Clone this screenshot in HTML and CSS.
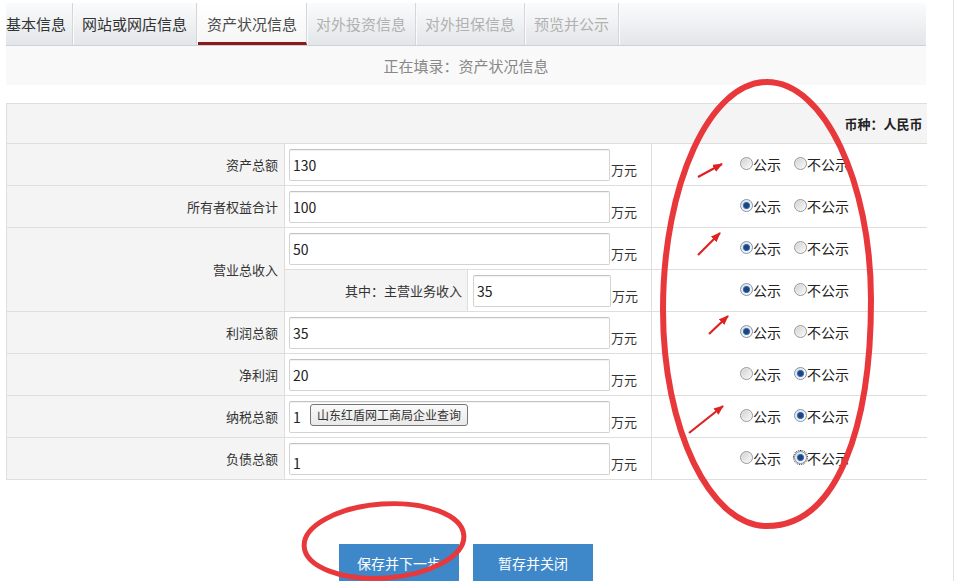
FILE: index.html
```html
<!DOCTYPE html>
<html lang="zh-CN">
<head>
<meta charset="utf-8">
<title>资产状况信息</title>
<link rel="stylesheet" href="styles.css">
</head>
<body>
<div class="frame">
  <div class="page">
    <nav class="tabs">
      <a class="tab tab-first">基本信息</a>
      <a class="tab">网站或网店信息</a>
      <a class="tab active">资产状况信息</a>
      <a class="tab disabled">对外投资信息</a>
      <a class="tab disabled">对外担保信息</a>
      <a class="tab disabled">预览并公示</a>
    </nav>
    <div class="notice">正在填录：资产状况信息</div>

    <table class="form">
      <colgroup><col class="c-label"><col class="c-input"><col class="c-radio"></colgroup>
      <tr class="head"><th colspan="3">币种：人民币</th></tr>
      <tr class="row">
        <td class="label">资产总额</td>
        <td class="field"><div class="fi"><input class="num" value="130"><span class="unit">万元</span></div></td>
        <td class="pub"><label class="opt"><input type="radio" name="r1">公示</label><label class="opt"><input type="radio" name="r1">不公示</label></td>
      </tr>
      <tr class="row">
        <td class="label">所有者权益合计</td>
        <td class="field"><div class="fi"><input class="num" value="100"><span class="unit">万元</span></div></td>
        <td class="pub"><label class="opt"><input type="radio" name="r2" checked>公示</label><label class="opt"><input type="radio" name="r2">不公示</label></td>
      </tr>
      <tr class="row">
        <td class="label" rowspan="2">营业总收入</td>
        <td class="field"><div class="fi"><input class="num" value="50"><span class="unit">万元</span></div></td>
        <td class="pub"><label class="opt"><input type="radio" name="r3" checked>公示</label><label class="opt"><input type="radio" name="r3">不公示</label></td>
      </tr>
      <tr class="row">
        <td class="field split">
          <div class="sub">
            <div class="sub-label">其中：主营业务收入</div>
            <div class="fi sub-fi"><input class="num short" value="35"><span class="unit">万元</span></div>
          </div>
        </td>
        <td class="pub"><label class="opt"><input type="radio" name="r4" checked>公示</label><label class="opt"><input type="radio" name="r4">不公示</label></td>
      </tr>
      <tr class="row">
        <td class="label">利润总额</td>
        <td class="field"><div class="fi"><input class="num" value="35"><span class="unit">万元</span></div></td>
        <td class="pub"><label class="opt"><input type="radio" name="r5" checked>公示</label><label class="opt"><input type="radio" name="r5">不公示</label></td>
      </tr>
      <tr class="row">
        <td class="label">净利润</td>
        <td class="field"><div class="fi"><input class="num" value="20"><span class="unit">万元</span></div></td>
        <td class="pub"><label class="opt"><input type="radio" name="r6">公示</label><label class="opt"><input type="radio" name="r6" checked>不公示</label></td>
      </tr>
      <tr class="row">
        <td class="label">纳税总额</td>
        <td class="field"><div class="fi"><div class="box"><input class="num" value="1"><span class="suggest">山东红盾网工商局企业查询</span></div><span class="unit">万元</span></div></td>
        <td class="pub"><label class="opt"><input type="radio" name="r7">公示</label><label class="opt"><input type="radio" name="r7" checked>不公示</label></td>
      </tr>
      <tr class="row">
        <td class="label">负债总额</td>
        <td class="field"><div class="fi"><input class="num low" value="1"><span class="unit">万元</span></div></td>
        <td class="pub"><label class="opt"><input type="radio" name="r8">公示</label><label class="opt"><input type="radio" name="r8" class="focus" checked>不公示</label></td>
      </tr>
    </table>

    <div class="actions">
      <button class="btn">保存并下一步</button>
      <button class="btn">暂存并关闭</button>
    </div>
  </div>
</div>

<svg class="marks" width="956" height="581" viewBox="0 0 956 581" aria-hidden="true">
  <defs>
    <marker id="ah" markerWidth="10" markerHeight="8" refX="9" refY="4" orient="auto" markerUnits="userSpaceOnUse">
      <path d="M0 0 L10 4 L0 8 Z" fill="#df2121"/>
    </marker>
  </defs>
  <path d="M767 82 C824 82 871 182 871 300 C871 425 838 526 767 526 C710 526 663 429 663 310 C663 184 710 82 767 82 Z" fill="none" stroke="#e8383b" stroke-width="6"/>
  <ellipse cx="384" cy="541" rx="80" ry="37" transform="rotate(-4 384 541)" fill="none" stroke="#e8383b" stroke-width="5"/>
  <g stroke="#df2121" stroke-width="2.2" marker-end="url(#ah)">
    <line x1="698" y1="177" x2="722" y2="164"/>
    <line x1="698" y1="255" x2="720" y2="233"/>
    <line x1="709" y1="334" x2="728" y2="316"/>
    <line x1="689" y1="433" x2="723" y2="406"/>
  </g>
</svg>
</body>
</html>
```

FILE: styles.css
```css
* { box-sizing: border-box; }
html, body { margin: 0; padding: 0; background: #fff; }
body {
  font-family: "Noto Sans CJK SC", "Microsoft YaHei", sans-serif;
  color: #333;
  position: relative;
  width: 956px;
  height: 581px;
  overflow: hidden;
}
.frame {
  width: 954px;
  height: 581px;
  border-right: 1px solid #e2e2e2;
}
.page {
  width: 926px;
  padding-left: 6px;
  padding-top: 3px;
}

/* tabs */
.tabs {
  display: flex;
  height: 43px;
  background: linear-gradient(#fafbfc, #e3e6e9);
  border-bottom: 1px solid #cdd1d6;
  overflow: hidden;
}
.tab {
  display: flex;
  align-items: center;
  padding: 0 9px;
  font-size: 15px;
  line-height: 20px;
  color: #333;
  border-right: 1px solid #d3d7db;
  box-shadow: 1px 0 0 #fbfbfb;
  white-space: nowrap;
  text-decoration: none;
}
.tab-first { padding-left: 0; padding-right: 6px; }
.tab.active {
  background: linear-gradient(#ffffff, #f6f6f6);
  color: #4a4a4a;
  border-bottom: 3px solid #8a1b1b;
  padding-top: 3px;
  margin-left: 1px;
}
.tab.disabled { color: #b1b1b1; }

.notice {
  height: 39px;
  line-height: 39px;
  background: #f9f9f9;
  text-align: center;
  font-size: 15px;
  color: #888;
}

/* form table */
.form {
  margin-top: 18px;
  width: 920px;
  border-collapse: collapse;
  table-layout: fixed;
  font-size: 13px;
}
.c-label { width: 278px; }
.c-input { width: 367px; }
.c-radio { width: 275px; }
.form td, .form th {
  border: 1px solid #dedede;
  padding: 0;
}
.form td.pub, .form th { border-right: none; }
.head th {
  height: 40px;
  background: #f4f4f4;
  text-align: right;
  padding-right: 4px;
  font-weight: bold;
  color: #222;
  font-size: 13px;
}
.row { height: 42px; }
td.label {
  background: #f4f4f4;
  text-align: right;
  padding-right: 6px;
  color: #333;
}
td.field { padding-left: 4px; }
td.field.split { padding-left: 0; }

.fi {
  display: flex;
  align-items: flex-end;
}
.num {
  width: 321px;
  height: 32px;
  border: 1px solid #d3d3d3;
  border-top-color: #c2c2c2;
  border-radius: 2px;
  box-shadow: inset 0 1px 1px rgba(0,0,0,0.06);
  padding: 0 3px;
  font-family: "Noto Sans CJK SC", sans-serif;
  font-size: 14px;
  color: #222;
  background: #fff;
  outline: none;
}
.num.short { width: 138px; }
.num.low { padding-top: 9px; }
.unit {
  font-size: 13px;
  line-height: 16px;
  margin-bottom: 3px;
  margin-left: 1px;
  color: #333;
}

.sub { display: flex; height: 41px; }
.sub-label {
  width: 183px;
  background: #f4f4f4;
  border-right: 1px solid #dedede;
  display: flex;
  align-items: center;
  justify-content: flex-end;
  padding-right: 5px;
}
.sub-fi { padding-left: 5px; align-self: center; }

.box { position: relative; }
.suggest {
  position: absolute;
  left: 21px;
  top: 3px;
  height: 22px;
  padding: 0 6px;
  border: 1px solid #767676;
  border-radius: 3px;
  background: linear-gradient(#fafafa, #e9e9e9);
  font-size: 12px;
  line-height: 20px;
  color: #333;
  white-space: nowrap;
}

/* radios */
td.pub { padding-left: 88px; background: #fff; }
.opt {
  display: inline-flex;
  align-items: center;
  font-size: 14px;
  line-height: 18px;
  color: #222;
  margin-right: 13px;
}
.opt input {
  -webkit-appearance: none;
  appearance: none;
  width: 13px;
  height: 13px;
  margin: 0;
  border-radius: 50%;
  border: 1px solid #9a9a9a;
  background: linear-gradient(135deg, #cdcdcd 0%, #e6e6e6 50%, #fafafa 100%);
  box-shadow: inset 0 0 0 1px rgba(255,255,255,0.35);
}
.opt input:checked {
  border-color: #8496ad;
  background:
    radial-gradient(circle at 50% 50%, #1a4684 0 2.2px, #4b79b3 3.2px, rgba(255,255,255,0) 4px),
    linear-gradient(135deg, #cfd5dc 0%, #e8ebef 50%, #fafafa 100%);
}
.opt input.focus { outline: 1px dotted #222; outline-offset: 0; }

/* buttons */
.actions {
  display: flex;
  justify-content: center;
  gap: 14px;
  margin-top: 64px;
  width: 920px;
}
.btn {
  width: 120px;
  height: 37px;
  border: none;
  background: #3e88c9;
  color: #fff;
  font-family: "Noto Sans CJK SC", sans-serif;
  font-size: 14px;
}

.marks {
  position: absolute;
  left: 0;
  top: 0;
  pointer-events: none;
}
```
